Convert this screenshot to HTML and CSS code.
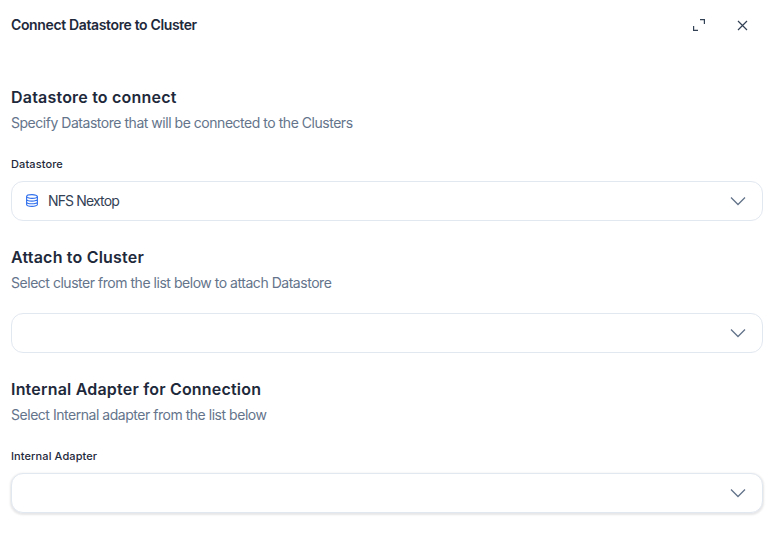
FILE: index.html
```
<!DOCTYPE html>
<html lang="en">
<head>
<meta charset="utf-8">
<title>Connect Datastore to Cluster</title>
<link rel="stylesheet" href="styles.css">
</head>
<body>
<div class="dialog">
  <header class="header">
    <h1 class="title">Connect Datastore to Cluster</h1>
    <div class="actions">
      <svg class="icon" width="12" height="12" viewBox="0 0 12 12" fill="none"><path d="M.6 7v4.400H5M7 .6h4.400V5" stroke="#334155" stroke-width="1.200"/></svg>
      <svg class="icon" width="11" height="11" viewBox="0 0 11 11" fill="none"><path d="M1 1l9 9M10 1l-9 9" stroke="#334155" stroke-width="1.200"/></svg>
    </div>
  </header>
  <section class="section first">
    <h2 class="heading">Datastore to connect</h2>
    <p class="sub">Specify Datastore that will be connected to the Clusters</p>
    <div class="label">Datastore</div>
    <div class="select">
      <svg class="db" width="12" height="13" viewBox="0 0 12 13" fill="none" stroke="#2f6fed" stroke-width="1.100"><ellipse cx="6" cy="2.500" rx="5.400" ry="1.900"/><path d="M.6 2.500v8c0 1 2.400 1.900 5.400 1.900s5.400-.9 5.400-1.900v-8M.6 5.200c0 1 2.400 1.900 5.400 1.900s5.400-.9 5.400-1.900M.6 7.900c0 1 2.400 1.900 5.400 1.900s5.400-.9 5.400-1.900"/></svg>
      <span class="value">NFS Nextop</span>
      <svg class="chev" width="16" height="10" viewBox="0 0 16 10" fill="none"><path d="M1 1.500l7 7 7-7" stroke="#64748b" stroke-width="1.300"/></svg>
    </div>
  </section>
  <section class="section">
    <h2 class="heading">Attach to Cluster</h2>
    <p class="sub">Select cluster from the list below to attach Datastore</p>
    <div class="select nolabel">
      <svg class="chev" width="16" height="10" viewBox="0 0 16 10" fill="none"><path d="M1 1.500l7 7 7-7" stroke="#64748b" stroke-width="1.300"/></svg>
    </div>
  </section>
  <section class="section">
    <h2 class="heading">Internal Adapter for Connection</h2>
    <p class="sub">Select Internal adapter from the list below</p>
    <div class="label">Internal Adapter</div>
    <div class="select focus">
      <svg class="chev" width="16" height="10" viewBox="0 0 16 10" fill="none"><path d="M1 1.500l7 7 7-7" stroke="#64748b" stroke-width="1.300"/></svg>
    </div>
  </section>
</div>
</body>
</html>
```
FILE: styles.css
```
* { box-sizing: border-box; }
html, body { margin: 0; background: #fff; }
body { font-family: Inter, "Liberation Sans", sans-serif; color: #1e293b; }
.dialog { width: 780px; height: 554px; padding: 0 17px 0 11px; overflow: hidden; }
.header { display: flex; align-items: center; justify-content: space-between; height: 50px; }
.title { margin: 0; font-size: 14px; line-height: 20px; font-weight: 600; letter-spacing: -0.36px; color: #1e293b; }
.actions { display: flex; align-items: center; gap: 32px; padding-right: 15px; }
.icon { display: block; }
.section { margin-top: 26px; }
.section.first { margin-top: 37px; }
.heading { margin: 0; font-size: 16px; line-height: 20px; font-weight: 600; letter-spacing: 0.2px; color: #1e293b; }
.sub { margin: 6px 0 0; font-size: 14px; line-height: 20px; letter-spacing: -0.47px; color: #64748b; }
.label { margin-top: 23px; font-size: 11px; line-height: 16px; font-weight: 500; letter-spacing: 0.1px; color: #1e293b; }
.select { display: flex; align-items: center; height: 40px; margin-top: 9px; padding: 0 16px 0 14px; border: 1px solid #e2e8f0; border-radius: 12px; background: #fff; }
.select.nolabel { margin-top: 20px; }
.select.focus { box-shadow: 0 1px 2px 1px rgba(15, 23, 42, .1); }
.db { flex: none; margin-bottom: 2px; }
.value { margin-left: 10px; font-size: 14px; line-height: 20px; letter-spacing: -0.85px; color: #334155; }
.chev { flex: none; margin-left: auto; }
```
